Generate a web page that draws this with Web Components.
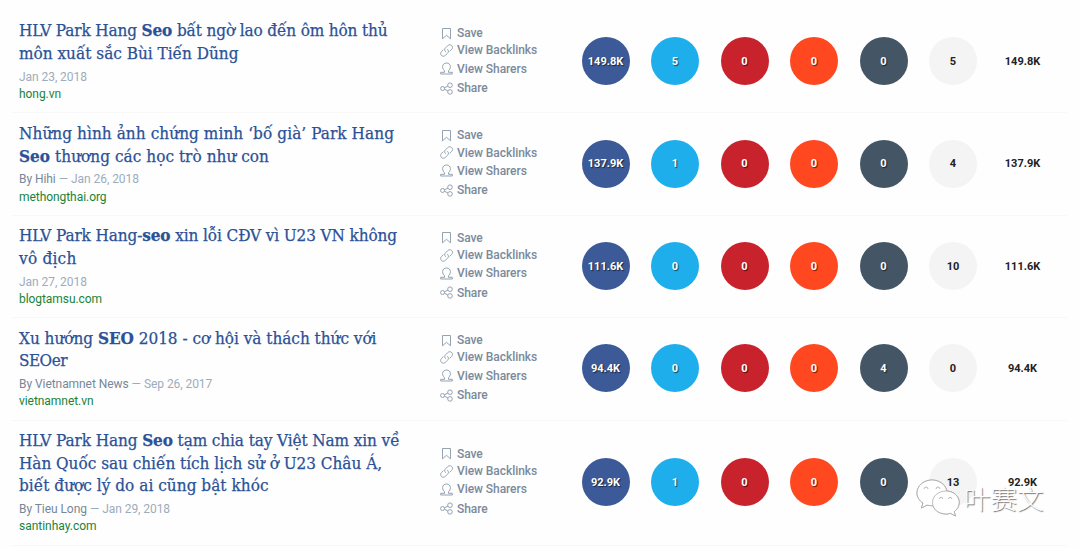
<!DOCTYPE html>
<html lang="vi">
<head>
<meta charset="utf-8">
<title>Content results</title>
<style>
    body {
        margin: 0;
        height: 548px;
        overflow: hidden;
        position: relative;
        background: #fefefe;
        font-family: Roboto, "Liberation Sans", sans-serif;
    }
</style>
</head>
<body>
<result-list></result-list>
<wechat-mark>叶赛文</wechat-mark>

<script>
const results = [
    {
        title: [['HLV Park Hang <b>Seo</b> bất ngờ lao đến ôm hôn thủ', 368.5], ['môn xuất sắc Bùi Tiến Dũng', 219.5]],
        date: 'Jan 23, 2018', site: 'hong.vn', siteWidth: 42,
        counts: ['149.8K', 5, 0, 0, 0, 5, '149.8K']
    },
    {
        title: [['Những hình ảnh chứng minh ‘bố già’ Park Hang', 375], ['<b>Seo</b> thương các học trò như con', 250]],
        author: 'By Hihi', date: 'Jan 26, 2018', site: 'methongthai.org', siteWidth: 87.5,
        counts: ['137.9K', 1, 0, 0, 0, 4, '137.9K']
    },
    {
        title: [['HLV Park Hang-<b>seo</b> xin lỗi CĐV vì U23 VN không', 378], ['vô địch', 57.5]],
        date: 'Jan 27, 2018', site: 'blogtamsu.com', siteWidth: 83,
        counts: ['111.6K', 0, 0, 0, 0, 10, '111.6K']
    },
    {
        title: [['Xu hướng <b>SEO</b> 2018 - cơ hội và thách thức với', 357.5], ['SEOer', 48]],
        author: 'By Vietnamnet News', date: 'Sep 26, 2017', site: 'vietnamnet.vn', siteWidth: 74.5,
        counts: ['94.4K', 0, 0, 0, 4, 0, '94.4K']
    },
    {
        title: [['HLV Park Hang <b>Seo</b> tạm chia tay Việt Nam xin về', 380.5], ['Hàn Quốc sau chiến tích lịch sử ở U23 Châu Á,', 363], ['biết được lý do ai cũng bật khóc', 249.5]],
        author: 'By Tieu Long', date: 'Jan 29, 2018', site: 'santinhay.com', siteWidth: 77.5,
        counts: ['92.9K', 1, 0, 0, 0, 13, '92.9K']
    }
];

const icons = {
    save: '<path d="M2.500 1.500h8v10.300L6.500 8.300l-4 3.500z"/>',
    link: '<path d="M5.700 7.800C4.300 6.500 4.400 5 5.500 3.800L7.600 1.700C8.900.4 10.600.5 11.700 1.500c1.100 1.100 1.100 2.800-.1 4L9.700 7.400M7.400 5.200c1.400 1.300 1.300 2.800.2 4l-2.200 2.100c-1.200 1.200-2.900 1.200-4 .1-1.100-1.100-1-2.700.1-3.900L3.400 5.600"/>',
    person: '<path d="M.7 12v-1.700h3.800V8.700C3.300 7.700 2.600 6.300 2.600 4.700 2.600 2.500 4.200 1 6.500 1s3.900 1.500 3.900 3.700c0 1.600-.7 3-1.900 4v1.600h3.800V12z"/>',
    share: '<circle cx="2.600" cy="6.500" r="2"/><circle cx="10" cy="3.200" r="2.300"/><circle cx="10" cy="9.900" r="2.300"/><path d="M4.500 5.700 7.900 4.200M4.500 7.300 7.900 8.900"/>'
};

// Keeps a line of text at a given width by spreading the letters
class FitLine extends HTMLElement {
    connectedCallback() {
        this.attachShadow({ mode: 'open' }).innerHTML = `
            <style>
                :host { display: block; white-space: nowrap; }
                span { display: inline-block; }
            </style>
            <span><slot></slot></span>
        `;
        let span = this.shadowRoot.querySelector('span');
        let width = parseFloat(this.getAttribute('width'));
        let length = [...this.textContent].length;
        if (width) {
            let gap = (width - span.getBoundingClientRect().width) / length;
            span.style.letterSpacing = gap + 'px';
        }
    }
}

class ActionItem extends HTMLElement {
    connectedCallback() {
        this.attachShadow({ mode: 'open' }).innerHTML = `
            <style>
                :host {
                    display: flex;
                    align-items: center;
                    gap: 4px;
                    color: #7b8a9b;
                    font-size: 12px;
                    font-weight: 500;
                    letter-spacing: -.06px;
                }
                svg {
                    width: 13px;
                    height: 13px;
                    fill: none;
                    stroke: #8a98a8;
                    stroke-width: .9;
                    overflow: visible;
                }
            </style>
            <svg viewBox="0 0 13 13">${icons[this.getAttribute('icon')]}</svg>
            <slot></slot>
        `;
    }
}

class ShareCount extends HTMLElement {
    connectedCallback() {
        this.attachShadow({ mode: 'open' }).innerHTML = `
            <style>
                :host {
                    display: flex;
                    align-items: center;
                    justify-content: center;
                    justify-self: center;
                    width: 48px;
                    height: 48px;
                    border-radius: 50%;
                    background: var(--count-color);
                    color: #fff;
                    font-size: 11px;
                    font-weight: 700;
                    text-shadow: 1px 1px 1px rgba(0, 0, 0, .6);
                }
                :host([plain]) {
                    color: #222;
                    text-shadow: none;
                }
            </style>
            <slot></slot>
        `;
    }
}

class ResultRow extends HTMLElement {
    connectedCallback() {
        let item = this.item;
        let colors = ['#3c5a97', '#1faeec', '#c8232c', '#ff4820', '#445566', '#f4f4f4', 'transparent'];
        this.attachShadow({ mode: 'open' }).innerHTML = `
            <style>
                :host {
                    display: grid;
                    grid-template-columns: 421px 130.750px 486.500px;
                    align-items: center;
                    box-sizing: border-box;
                    padding: 8.400px 0 9.200px 7px;
                    border-bottom: 1px solid #f7f7f7;
                }
                .title {
                    color: #2b5197;
                    font: 17px/22.800px "Roboto Slab", "DejaVu Serif Condensed", "DejaVu Serif", serif;
                    font-stretch: condensed;
                    -webkit-text-stroke: .25px #2b5197;
                }
                .meta {
                    display: flex;
                    gap: 3px;
                    margin-top: 4px;
                    color: #9dacbc;
                    font-size: 12px;
                    line-height: 17.200px;
                    letter-spacing: -.06px;
                }
                .author { color: #778797; }
                .site {
                    color: #18833a;
                    font-size: 12px;
                    line-height: 17px;
                }
                .actions {
                    display: grid;
                    grid-template-rows: 17px 17.500px 19px 20px;
                }
                .counts {
                    display: grid;
                    grid-template-columns: repeat(7, 69.500px);
                }
            </style>
            <div>
                <div class="title">${item.title.map(([text, width]) => `<fit-line width="${width}">${text}</fit-line>`).join('')}</div>
                <div class="meta">
                    ${item.author ? `<span class="author">${item.author}</span><span>—</span>` : ''}
                    <span>${item.date}</span>
                </div>
                <fit-line class="site" width="${item.siteWidth}">${item.site}</fit-line>
            </div>
            <div class="actions">
                <action-item icon="save">Save</action-item>
                <action-item icon="link">View Backlinks</action-item>
                <action-item icon="person">View Sharers</action-item>
                <action-item icon="share">Share</action-item>
            </div>
            <div class="counts">
                ${item.counts.map((count, i) => `<share-count ${i > 4 ? 'plain' : ''} style="--count-color: ${colors[i]}">${count}</share-count>`).join('')}
            </div>
        `;
    }
}

class ResultList extends HTMLElement {
    connectedCallback() {
        this.attachShadow({ mode: 'open' }).innerHTML = `
            <style>
                :host {
                    display: block;
                    padding: 11px 13px 0 12px;
                }
            </style>
        `;
        for (let item of results) {
            let row = document.createElement('result-row');
            row.item = item;
            this.shadowRoot.appendChild(row);
        }
    }
}

class WechatMark extends HTMLElement {
    connectedCallback() {
        this.attachShadow({ mode: 'open' }).innerHTML = `
            <style>
                :host {
                    position: absolute;
                    left: 916px;
                    top: 478px;
                    display: flex;
                    align-items: center;
                    gap: 4px;
                    color: #fff;
                    font: 300 26.500px/26px "Noto Sans CJK SC", sans-serif;
                    text-shadow: 1px 1px 1px #777;
                }
                svg {
                    width: 44px;
                    height: 40px;
                    fill: #fff;
                    stroke: #aaa;
                    stroke-width: .8;
                    filter: drop-shadow(.5px .6px .4px #999);
                }
            </style>
            <svg viewBox="0 0 44 40">
                <path d="M16 2C8 2 1 7.500 1 15c0 4.300 2.300 7.500 6 10l-1.500 5 5.500-3c1.700.5 3.300.7 5 .7 8 0 15-5.500 15-12.700S24 2 16 2z"/>
                <path d="M30 13c-7.500 0-13.500 5-13.500 11.500S22.500 36 30 36c1.700 0 3-.2 4.500-.7l5 2.700-1.300-4.300c3-2.200 5-5.300 5-9.200C43.200 18 37.500 13 30 13z"/>
                <g fill="none"><path d="M8 11a2 2 0 0 1 4 0M20 11a2 2 0 0 1 4 0M23.500 21a1.700 1.700 0 0 1 3.400 0M32.500 21a1.700 1.700 0 0 1 3.400 0"/></g>
            </svg>
            <slot></slot>
        `;
    }
}

customElements.define('fit-line', FitLine);
customElements.define('action-item', ActionItem);
customElements.define('share-count', ShareCount);
customElements.define('result-row', ResultRow);
customElements.define('result-list', ResultList);
customElements.define('wechat-mark', WechatMark);
</script>
</body>
</html>
